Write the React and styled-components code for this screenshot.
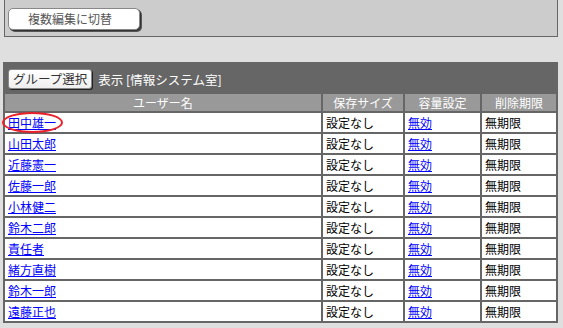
import React from "react";
import styled, { createGlobalStyle } from "styled-components";

const Global = createGlobalStyle`
  html, body { margin: 0; padding: 0; background: #e0dfe0; }
  body { font-family: "Noto Sans CJK JP", "DejaVu Sans", sans-serif; font-size: 12px; }
`;

const Page = styled.div`
  padding: 0 5px 0 4px;
  display: flex;
  flex-direction: column;
  gap: 25px;
`;

const TopPanel = styled.div`
  margin-top: -1px;
  background: #cccccc;
  border: 1px solid #666;
  padding: 8px 3px 6px;
`;

const PillButton = styled.button`
  width: 132px;
  height: 22px;
  background: #fff;
  border: 1px solid #888;
  border-radius: 5px;
  box-shadow: 1px 1px 0 #333, 2px 2px 0 #555;
  font-family: inherit;
  font-size: 12px;
  color: #555;
  padding: 0 0 0 8px;
  text-align: left;
  text-indent: 11px;
  line-height: 18px;
`;

const Table = styled.table`
  width: 555px;
  background: #666;
  border-collapse: separate;
  border-spacing: 2px;
  margin-left: -1px;
  padding: 0;
`;

const CaptionCell = styled.div`
  background: #666;
  color: #fff;
  height: 26px;
  padding: 2px 0 0 3px;
  display: flex;
  align-items: center;
  gap: 6px;
  font-size: 12.5px;
`;

const SelectButton = styled.button`
  height: 20px;
  padding: 0 4px;
  background: linear-gradient(#fff, #eee);
  border: 1px solid #888;
  border-radius: 3px;
  box-shadow: 1px 1px 0 #222;
  font-family: inherit;
  font-size: 12.5px;
  color: #333;
  line-height: 16px;
`;

const Th = styled.th`
  background: #999;
  color: #fff;
  font-weight: normal;
  height: 17px;
  padding: 0;
  line-height: 17px;
  text-align: center;
  width: ${p => p.$w}px;
`;

const Td = styled.td`
  background: #fff;
  color: #000;
  height: 19px;
  padding: 0 0 0 3px;
  line-height: 19px;
  white-space: nowrap;
`;

const NameCell = styled(Td)`
  position: relative;
`;

const Link = styled.a`
  color: #0000ff;
  text-decoration: underline;
  cursor: pointer;
`;

const Circle = styled.span`
  position: absolute;
  left: -3px;
  top: -1px;
  width: 57px;
  height: 17px;
  border: 2px solid #e8202a;
  border-radius: 50%;
  pointer-events: none;
`;

const users = ["田中雄一", "山田太郎", "近藤憲一", "佐藤一郎", "小林健二", "鈴木二郎", "責任者", "緒方直樹", "鈴木一郎", "遠藤正也"];

export default function App() {
  return (
    <>
      <Global />
      <Page>
        <TopPanel>
          <PillButton>複数編集に切替</PillButton>
        </TopPanel>
        <Table>
          <tbody>
            <tr>
              <td colSpan={4} style={{ padding: 0 }}>
                <CaptionCell>
                  <SelectButton>グループ選択</SelectButton>
                  <span>表示 [情報システム室]</span>
                </CaptionCell>
              </td>
            </tr>
            <tr>
              <Th $w={316}>ユーザー名</Th>
              <Th $w={80}>保存サイズ</Th>
              <Th $w={75}>容量設定</Th>
              <Th $w={74}>削除期限</Th>
            </tr>
            {users.map((u, i) => (
              <tr key={u}>
                <NameCell>
                  {i === 0 && <Circle />}
                  <Link>{u}</Link>
                </NameCell>
                <Td>設定なし</Td>
                <Td><Link>無効</Link></Td>
                <Td>無期限</Td>
              </tr>
            ))}
          </tbody>
        </Table>
      </Page>
    </>
  );
}
